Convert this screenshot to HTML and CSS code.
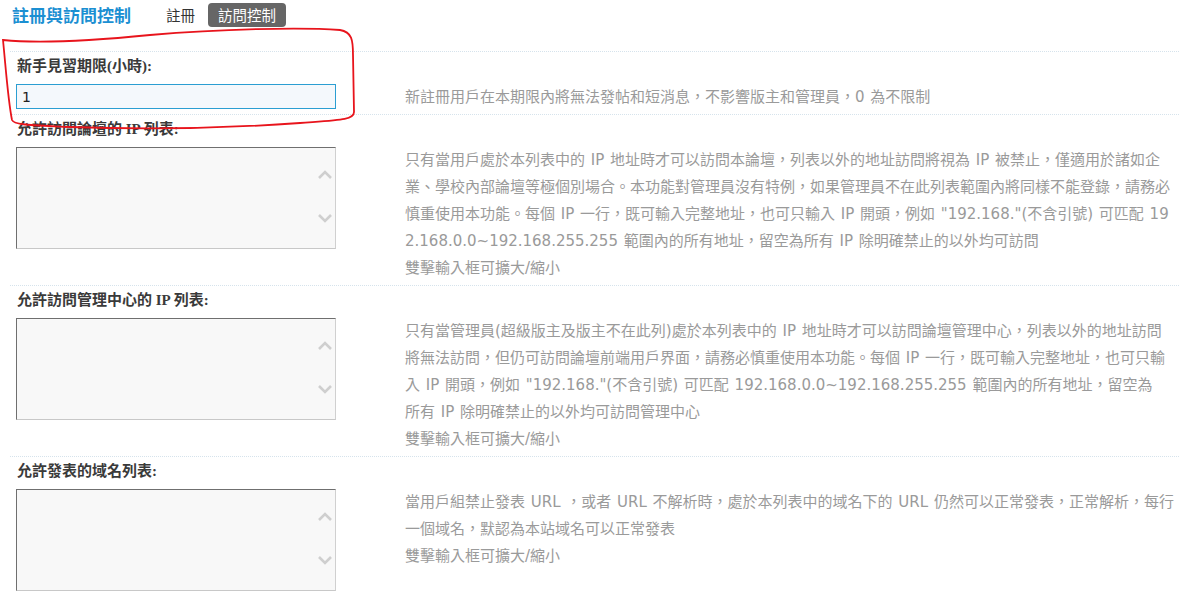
FILE: index.html
```html
<!DOCTYPE html>
<html lang="zh-Hant">
<head>
<meta charset="utf-8">
<title>註冊與訪問控制</title>
<link rel="stylesheet" href="styles.css">
</head>
<body>
<div class="page">
  <div class="header">
    <h3 class="title">註冊與訪問控制</h3>
    <ul class="tabs">
      <li class="tab">註冊</li>
      <li class="tab current">訪問控制</li>
    </ul>
  </div>

  <div class="settings">
    <div class="setting">
      <div class="label">新手見習期限(小時):</div>
      <div class="field">
        <div class="control"><input class="text-input" type="text" value="1"></div>
        <div class="tips">新註冊用戶在本期限內將無法發帖和短消息，不影響版主和管理員，0 為不限制</div>
      </div>
    </div>

    <div class="setting">
      <div class="label">允許訪問論壇的 IP 列表:</div>
      <div class="field">
        <div class="control">
          <div class="area-wrap">
            <textarea class="area"></textarea>
            <svg class="chev chev-up" width="16" height="10" viewBox="0 0 16 10"><path d="M2 8 L8 2 L14 8" fill="none" stroke="#cfcfcf" stroke-width="2.6"/></svg>
            <svg class="chev chev-down" width="16" height="10" viewBox="0 0 16 10"><path d="M2 2 L8 8 L14 2" fill="none" stroke="#cfcfcf" stroke-width="2.6"/></svg>
          </div>
        </div>
        <div class="tips">只有當用戶處於本列表中的 IP 地址時才可以訪問本論壇，列表以外的地址訪問將視為 IP 被禁止，僅適用於諸如企<br>業、學校內部論壇等極個別場合。本功能對管理員沒有特例，如果管理員不在此列表範圍內將同樣不能登錄，請務必<br>慎重使用本功能。每個 IP 一行，既可輸入完整地址，也可只輸入 IP 開頭，例如 "192.168."(不含引號) 可匹配 19<br>2.168.0.0~192.168.255.255 範圍內的所有地址，留空為所有 IP 除明確禁止的以外均可訪問<br>雙擊輸入框可擴大/縮小</div>
      </div>
    </div>

    <div class="setting">
      <div class="label">允許訪問管理中心的 IP 列表:</div>
      <div class="field">
        <div class="control">
          <div class="area-wrap">
            <textarea class="area"></textarea>
            <svg class="chev chev-up" width="16" height="10" viewBox="0 0 16 10"><path d="M2 8 L8 2 L14 8" fill="none" stroke="#cfcfcf" stroke-width="2.6"/></svg>
            <svg class="chev chev-down" width="16" height="10" viewBox="0 0 16 10"><path d="M2 2 L8 8 L14 2" fill="none" stroke="#cfcfcf" stroke-width="2.6"/></svg>
          </div>
        </div>
        <div class="tips">只有當管理員(超級版主及版主不在此列)處於本列表中的 IP 地址時才可以訪問論壇管理中心，列表以外的地址訪問<br>將無法訪問，但仍可訪問論壇前端用戶界面，請務必慎重使用本功能。每個 IP 一行，既可輸入完整地址，也可只輸<br>入 IP 開頭，例如 "192.168."(不含引號) 可匹配 192.168.0.0~192.168.255.255 範圍內的所有地址，留空為<br>所有 IP 除明確禁止的以外均可訪問管理中心<br>雙擊輸入框可擴大/縮小</div>
      </div>
    </div>

    <div class="setting">
      <div class="label">允許發表的域名列表:</div>
      <div class="field">
        <div class="control">
          <div class="area-wrap">
            <textarea class="area"></textarea>
            <svg class="chev chev-up" width="16" height="10" viewBox="0 0 16 10"><path d="M2 8 L8 2 L14 8" fill="none" stroke="#cfcfcf" stroke-width="2.6"/></svg>
            <svg class="chev chev-down" width="16" height="10" viewBox="0 0 16 10"><path d="M2 2 L8 8 L14 2" fill="none" stroke="#cfcfcf" stroke-width="2.6"/></svg>
          </div>
        </div>
        <div class="tips">當用戶組禁止發表 URL ，或者 URL 不解析時，處於本列表中的域名下的 URL 仍然可以正常發表，正常解析，每行<br>一個域名，默認為本站域名可以正常發表<br>雙擊輸入框可擴大/縮小</div>
      </div>
    </div>
  </div>

  <svg class="annotation" width="360" height="135" viewBox="0 0 360 135">
    <path d="M3 40 C 30 43, 80 42, 150 35 C 220 29, 300 27, 340 30 C 352 32, 353 40, 353 55 L 354 112 C 354 120, 340 120, 300 123 C 230 128, 150 130, 70 127 C 30 125, 14 125, 12 120 C 8 100, 6 70, 3 40 Z" fill="none" stroke="#e8141c" stroke-width="1.8"/>
  </svg>
</div>
</body>
</html>
```

FILE: styles.css
```css
html, body {
  margin: 0;
  padding: 0;
  background: #fff;
}

.page {
  position: relative;
  width: 1179px;
  height: 602px;
  overflow: hidden;
  font-family: "DejaVu Sans", "Noto Sans CJK TC", sans-serif;
}

.header {
  display: flex;
  align-items: center;
  height: 25px;
  padding: 2px 0 0 12px;
  margin-bottom: 24px;
}

.title {
  margin: 0;
  font-family: "Noto Sans CJK TC", sans-serif;
  font-size: 17px;
  font-weight: 700;
  color: #1b8fd2;
  line-height: 25px;
}

.tabs {
  display: flex;
  align-items: center;
  list-style: none;
  margin: 0 0 0 25px;
  padding: 0;
  gap: 3px;
}

.tab {
  font-family: "Noto Sans CJK TC", sans-serif;
  font-size: 14.5px;
  color: #333;
  height: 24px;
  line-height: 24px;
  padding: 0 10px;
  border-radius: 4px;
}

.tab.current {
  background: #666;
  color: #fff;
}

.settings {
  margin-left: 10px;
}

.setting {
  border-top: 1px dotted #d6e3ec;
  padding-bottom: 3px;
}

.label {
  padding: 4px 0 0 7px;
  height: 20px;
  line-height: 20px;
  font-family: "Liberation Serif", "Noto Sans CJK TC", serif;
  font-size: 15px;
  font-weight: 700;
  color: #3a3a3a;
}

.field {
  display: flex;
  align-items: flex-start;
  margin-top: 8px;
}

.control {
  width: 320px;
  margin-left: 6px;
  flex: none;
}

.text-input {
  display: block;
  box-sizing: border-box;
  width: 320px;
  height: 25px;
  margin: 0;
  padding: 0 5px;
  border: 1px solid #2b9ed2;
  background: #f4f8fc;
  font-family: "DejaVu Sans", sans-serif;
  font-size: 14px;
  color: #222;
  outline: none;
}

.area-wrap {
  position: relative;
  width: 320px;
  height: 102px;
}

.area {
  display: block;
  box-sizing: border-box;
  width: 320px;
  height: 102px;
  margin: 0;
  padding: 2px;
  resize: none;
  overflow: hidden;
  border-style: solid;
  border-width: 1px;
  border-color: #6f6f6f #d0d0d0 #c8c8c8 #6f6f6f;
  background: #f8f8f8;
}

.chev {
  position: absolute;
  left: 301px;
}

.chev-up {
  top: 23px;
}

.chev-down {
  top: 66px;
}

.tips {
  margin-left: 69px;
  font-family: "DejaVu Sans", "Noto Sans CJK TC", sans-serif;
  font-size: 15px;
  line-height: 27px;
  word-spacing: 1px;
  white-space: nowrap;
  color: #9a9a9a;
}

.annotation {
  position: absolute;
  left: 0;
  top: 0;
  pointer-events: none;
}
```
